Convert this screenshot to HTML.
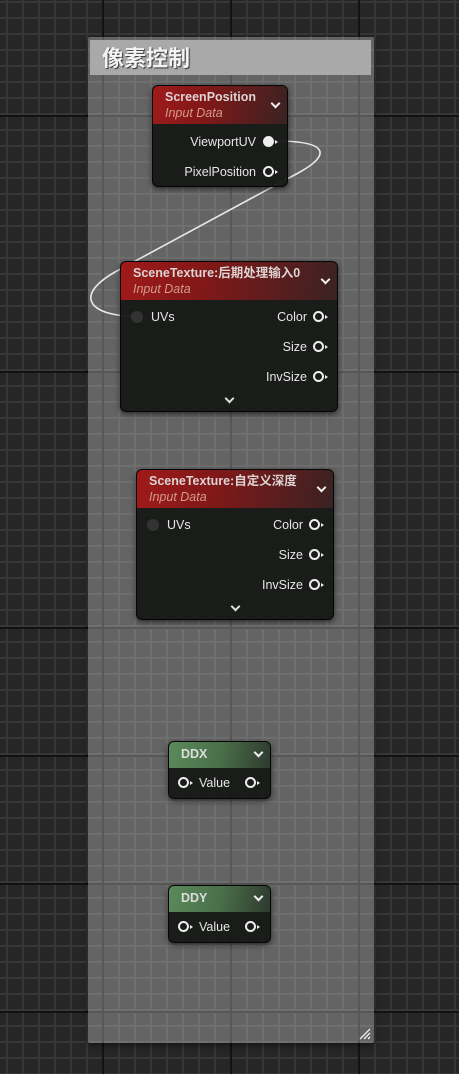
<!DOCTYPE html>
<html><head><meta charset="utf-8"><style>
*{margin:0;padding:0;box-sizing:border-box}
body{width:459px;height:1074px;overflow:hidden;position:relative;background:#262626;font-family:"Liberation Sans","Noto Sans CJK SC",sans-serif}
.grid{position:absolute;inset:0;
background-image:
linear-gradient(90deg,#121212 0 2px,transparent 2px),
linear-gradient(90deg,#363636 0 2px,transparent 2px),
linear-gradient(0deg,#363636 0 2px,transparent 2px);
background-size:128px 128px,16px 16px,16px 16px;
background-position:102px 0,6px 0,0 3px}
.hl{position:absolute;left:0;width:459px;height:2px;background:#121212}
.comment{position:absolute;left:88px;top:37px;width:286px;height:1006px;background:rgba(229,229,229,0.33);box-shadow:0 2px 6px rgba(0,0,0,.5);border-radius:2px}
.chead{position:absolute;left:2px;top:3px;width:281px;height:35px;background:#a9a9a9;color:#f4f4f4;font-size:22px;line-height:35px;padding-left:12px;text-shadow:1px 1px 1px #333;font-family:"Noto Sans CJK SC",sans-serif;font-weight:bold}
.node{position:absolute;background:rgba(22,24,22,0.95);border:1px solid #050505;border-radius:6px;box-shadow:0 2px 6px rgba(0,0,0,.6);color:#e4e4e4;font-size:12px;overflow:hidden}
.hd{position:relative;height:38px;background:linear-gradient(100deg,#a01a1a 0%,#801818 40%,#3a2222 100%);padding:4px 0 0 12px}
.hd.g{height:26px;background:linear-gradient(100deg,#5a8a5a 0%,#4a704a 50%,#2e3a2e 100%);padding-top:5px}
.t{font-weight:bold;color:#ddd4d4;font-size:12.5px;line-height:15px}
.s{font-style:italic;color:#d49a8a;font-size:12.5px;line-height:16px}
.chev{position:absolute;right:8px;top:14px;width:7px;height:7px;border-right:2px solid #eee;border-bottom:2px solid #eee;transform:rotate(45deg)}
.hd.g .chev{top:7px}
.row{position:absolute;font-size:12.5px;line-height:14px;color:#e6e6e6}
.pin{position:absolute;width:11px;height:11px;border:2px solid #eee;border-radius:50%}
.pin:after{content:"";position:absolute;right:-6px;top:2px;border-left:3px solid #eee;border-top:2.5px solid transparent;border-bottom:2.5px solid transparent}
.pin.f{background:#eee}
.in{position:absolute;width:12px;height:12px;border-radius:50%;background:#333}
.bchev{position:absolute;width:7px;height:7px;border-right:2px solid #ddd;border-bottom:2px solid #ddd;transform:rotate(45deg)}
</style></head><body>
<div class="grid"></div>
<div class="hl" style="top:115px"></div>
<div class="hl" style="top:371px"></div>
<div class="hl" style="top:627px"></div>
<div class="hl" style="top:755px"></div>
<div class="hl" style="top:883px"></div>
<div class="hl" style="top:1011px"></div>
<div class="comment"><div class="chead">像素控制</div>
<svg style="position:absolute;right:3px;bottom:3px" width="12" height="12"><path d="M1 11L11 1M5 11L11 5M9 11L11 9" stroke="#eee" stroke-width="1.3"/></svg>
</div>

<svg style="position:absolute;left:0;top:0" width="459" height="1074"><path d="M275 141 C 330 141, 330 155, 300 172 L 115 272 C 70 298, 95 316, 132 316" stroke="#e8e8e8" stroke-width="1.6" fill="none"/></svg>

<div class="node" style="left:152px;top:85px;width:136px;height:102px">
 <div class="hd"><div class="t">ScreenPosition</div><div class="s">Input Data</div><div class="chev"></div></div>
 <div class="row" style="right:31px;top:49px">ViewportUV</div><div class="pin f" style="left:110px;top:50px"></div>
 <div class="row" style="right:31px;top:79px">PixelPosition</div><div class="pin" style="left:110px;top:80px"></div>
</div>

<div class="node" style="left:120px;top:261px;width:218px;height:151px">
 <div class="hd"><div class="t">SceneTexture:后期处理输入0</div><div class="s">Input Data</div><div class="chev"></div></div>
 <div class="in" style="left:10px;top:49px"></div><div class="row" style="left:30px;top:48px">UVs</div>
 <div class="row" style="right:30px;top:48px">Color</div><div class="pin" style="left:192px;top:49px"></div>
 <div class="row" style="right:30px;top:78px">Size</div><div class="pin" style="left:192px;top:79px"></div>
 <div class="row" style="right:30px;top:108px">InvSize</div><div class="pin" style="left:192px;top:109px"></div>
 <div class="bchev" style="left:105px;top:133px"></div>
</div>

<div class="node" style="left:136px;top:469px;width:198px;height:151px">
 <div class="hd"><div class="t">SceneTexture:自定义深度</div><div class="s">Input Data</div><div class="chev"></div></div>
 <div class="in" style="left:10px;top:49px"></div><div class="row" style="left:30px;top:48px">UVs</div>
 <div class="row" style="right:30px;top:48px">Color</div><div class="pin" style="left:172px;top:49px"></div>
 <div class="row" style="right:30px;top:78px">Size</div><div class="pin" style="left:172px;top:79px"></div>
 <div class="row" style="right:30px;top:108px">InvSize</div><div class="pin" style="left:172px;top:109px"></div>
 <div class="bchev" style="left:95px;top:133px"></div>
</div>

<div class="node" style="left:168px;top:741px;width:103px;height:58px">
 <div class="hd g"><div class="t" style="color:#ddd">DDX</div><div class="chev"></div></div>
 <div class="pin" style="left:9px;top:35px"></div><div class="row" style="left:30px;top:34px">Value</div>
 <div class="pin" style="left:76px;top:35px"></div>
</div>

<div class="node" style="left:168px;top:885px;width:103px;height:58px">
 <div class="hd g"><div class="t" style="color:#ddd">DDY</div><div class="chev"></div></div>
 <div class="pin" style="left:9px;top:35px"></div><div class="row" style="left:30px;top:34px">Value</div>
 <div class="pin" style="left:76px;top:35px"></div>
</div>
</body></html>
